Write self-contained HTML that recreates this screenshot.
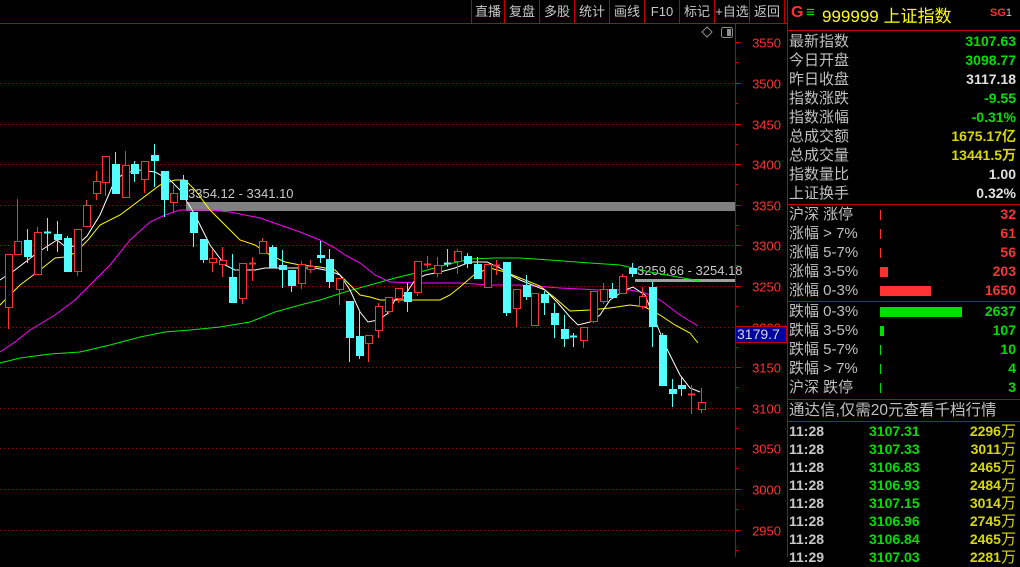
<!DOCTYPE html>
<html><head><meta charset="utf-8"><style>
body{margin:0;background:#000;width:1020px;height:557px;overflow:hidden;position:relative;font-family:"Liberation Sans","Noto Sans CJK SC",sans-serif}
.a{position:absolute;white-space:nowrap}
.tb{position:absolute;top:0;height:23px;line-height:23px;color:#c8c8c8;font-size:13px;text-align:center}
.l{position:absolute;left:789px;color:#c0c0c0;font-size:15px;line-height:19px}
.r{position:absolute;right:4px;font-size:14px;font-weight:bold;line-height:19px;font-family:"Liberation Sans","Noto Sans CJK SC",sans-serif}
.hl{position:absolute;left:787px;width:233px;height:1px;background:#c00000}
</style></head><body>
<svg id="s" width="1020" height="557" style="position:absolute;left:0;top:0"></svg>
<div class="a" style="left:0;top:23px;width:787px;height:1px;background:#c00000"></div>
<div class="a" style="left:787px;top:0;width:1px;height:557px;background:#c00000"></div>
<div class="a" style="left:735px;top:23px;width:1px;height:534px;background:#c00000"></div>
<div id="tbs"></div>
<div class="a" style="left:791px;top:4px;font-size:16px;color:#ff3232;font-weight:bold">G</div>
<div class="a" style="left:806px;top:4px;font-size:15px;color:#00e000">≡</div>
<div class="a" style="left:822px;top:2px;font-size:17px;color:#ffff00">999999 上证指数</div>
<div class="a" style="left:990px;top:7px;font-size:11px;color:#ff3232;font-weight:bold">SG<span style="font-weight:normal;color:#c0c0c0">1</span></div>
<div class="hl" style="top:30px"></div>
<div id="rp"></div>
<div class="a" style="left:735px;top:326px;width:49px;height:15px;background:#0000a0;border:1px solid #c00000;color:#d8d8d8;font-size:14px;line-height:15px;padding-left:1px">3179.7</div>
<script>
var s=document.getElementById('s'),h='';
function L(x1,y1,x2,y2,c,w,d){h+='<line x1="'+x1+'" y1="'+y1+'" x2="'+x2+'" y2="'+y2+'" stroke="'+c+'" stroke-width="'+(w||1)+'"'+(d?' stroke-dasharray="'+d+'"':'')+'/>';}
var labs=[3550,3500,3450,3400,3350,3300,3250,3200,3150,3100,3050,3000,2950];
labs.forEach(function(p,k){var y=Math.round(42.3+k*40.6)+0.5;if(k>0)L(0,y,735,y,'#a00000',1,'1 3');L(735,y,741,y,'#d00000');L(735,y+20,738,y+20,'#d00000');
h+='<text x="781" y="'+(y+5)+'" fill="#ff3232" font-size="13" text-anchor="end" font-family="Liberation Sans">'+p+'</text>';});
h+='<rect x="186" y="202" width="549" height="9" fill="#808080"/>';
h+='<rect x="635" y="279" width="100" height="3" fill="#a0a0a0"/>';
h+='<text x="188" y="198" fill="#c8c8c8" font-size="13" font-family="Liberation Sans">3354.12 - 3341.10</text>';
h+='<text x="637" y="275" fill="#c8c8c8" font-size="13" font-family="Liberation Sans">3259.66 - 3254.18</text>';
function P(a,c){h+='<polyline fill="none" stroke="'+c+'" stroke-width="1" points="'+a.map(function(p){return p.join(',')}).join(' ')+'"/>';}
P([[0,363],[20,358],[50,354],[80,352],[110,345],[140,337],[165,332],[190,330],[220,327],[250,322],[275,312],[300,305],[320,300],[345,292],[370,285],[395,278],[420,272],[445,265],[470,259],[495,258],[520,258],[550,260],[590,263],[620,265],[650,272],[700,281]],'#00f000');
P([[0,352],[15,342],[30,330],[55,315],[75,300],[90,285],[110,265],[130,240],[150,222],[165,215],[180,210],[195,210],[210,210],[230,212],[245,215],[260,218],[280,225],[300,232],[320,240],[335,248],[345,255],[360,263],[375,275],[390,282],[420,283],[460,283],[490,285],[520,285],[560,288],[600,290],[630,290],[645,293],[660,300],[680,315],[698,326]],'#ff00ff');
P([[0,305],[20,285],[40,270],[55,258],[65,257],[75,253],[88,240],[100,225],[120,215],[140,200],[160,185],[175,180],[185,180],[195,190],[210,210],[225,225],[240,240],[255,245],[270,255],[285,262],[300,265],[320,267],[335,270],[345,280],[360,295],[370,297],[380,300],[400,300],[440,300],[450,295],[460,287],[475,274],[490,268],[505,272],[520,278],[540,286],[555,298],[570,311],[590,310],[610,308],[630,305],[645,307],[660,315],[675,325],[690,333],[698,343]],'#ffff00');
P([[0,280],[15,270],[37,253],[57,240],[67,248],[77,245],[87,236],[100,215],[115,180],[125,173],[140,170],[155,172],[170,180],[180,190],[195,215],[210,245],[225,265],[235,270],[255,270],[265,268],[315,268],[330,271],[340,275],[350,290],[360,312],[368,322],[378,320],[387,314],[395,300],[405,295],[415,280],[425,275],[440,272],[455,268],[470,262],[487,262],[500,268],[510,275],[520,280],[545,290],[558,303],[570,317],[578,325],[590,322],[600,315],[610,300],[625,290],[633,287],[645,295],[655,320],[665,345],[680,375],[690,388],[700,392]],'#ffffff');
var C=[[8,254,307,254,329,'r'],[17,241,254,199,254,'r'],[27,240,257,229,263,'c'],[37,232,274,227,274,'r'],[47,232,232,218,251,'c'],[57,234,240,221,252,'c'],[67,238,272,236,272,'c'],[77,229,271,229,276,'r'],[86,205,226,200,226,'r'],[96,181,193,171,200,'r'],[105,156,182,156,196,'r'],[115,164,194,152,194,'c'],[125,165,197,151,197,'r'],[134,164,174,161,182,'c'],[144,161,179,161,193,'r'],[154,155,161,144,187,'c'],[164,171,200,171,217,'c'],[173,193,202,185,213,'r'],[183,180,200,175,200,'c'],[193,212,233,212,247,'c'],[203,239,260,239,263,'c'],[212,258,262,249,272,'r'],[222,260,264,247,277,'r'],[232,277,303,254,303,'c'],[242,263,298,263,304,'r'],[252,263,263,257,281,'r'],[262,241,253,238,253,'r'],[272,247,268,245,268,'c'],[282,265,270,250,288,'c'],[291,270,286,270,292,'c'],[301,264,283,261,289,'r'],[310,266,269,260,273,'r'],[320,255,258,241,263,'c'],[329,259,282,249,288,'c'],[339,278,289,278,305,'r'],[349,301,338,301,362,'c'],[359,336,356,312,359,'c'],[368,335,343,335,362,'r'],[378,306,330,303,338,'r'],[388,297,311,297,314,'r'],[398,288,298,288,303,'r'],[407,292,302,283,312,'c'],[417,261,292,261,296,'r'],[427,264,264,256,268,'r'],[437,265,273,257,277,'r'],[447,263,263,249,267,'c'],[457,251,261,249,274,'r'],[467,256,264,253,268,'c'],[477,264,279,257,279,'c'],[487,264,287,264,288,'r'],[496,265,265,260,275,'r'],[506,262,313,262,316,'c'],[516,289,308,289,327,'r'],[526,285,297,275,300,'c'],[534,293,325,293,325,'r'],[544,294,303,291,315,'c'],[554,313,325,303,338,'c'],[564,329,339,315,347,'c'],[573,336,336,333,347,'c'],[583,327,340,327,348,'r'],[593,291,321,291,323,'r'],[603,289,301,283,304,'r'],[612,289,298,283,298,'c'],[622,276,293,274,293,'r'],[632,268,274,263,277,'c'],[642,296,306,287,309,'r'],[652,287,327,282,347,'c'],[662,335,386,333,386,'c'],[672,389,394,379,407,'c'],[681,385,389,376,396,'c'],[691,394,394,385,414,'r'],[701,402,409,388,413,'r']];
C.forEach(function(k){var x=k[0],col=k[5]=='r'?'#ff3232':'#54ffff';
 L(x+0.5,k[3],x+0.5,k[4],col);
 if(k[2]-k[1]<2){L(x-3,k[1]+0.5,x+4,k[1]+0.5,col,2);}
 else if(k[5]=='r')h+='<rect x="'+(x-3)+'.5" y="'+k[1]+'.5" width="7" height="'+(k[2]-k[1])+'" fill="#000" stroke="'+col+'"/>';
 else h+='<rect x="'+(x-3)+'" y="'+k[1]+'" width="8" height="'+(k[2]-k[1])+'" fill="'+col+'"/>';});
h+='<path d="M707 27 L712 32 L707 37 L702 32 Z" fill="none" stroke="#909090"/>';
h+='<rect x="721.5" y="27.5" width="11" height="10" rx="2" fill="none" stroke="#909090"/><rect x="727" y="29" width="4" height="7" fill="#909090"/>';
s.innerHTML=h;
var tb=['直播','复盘','多股','统计','画线','F10','标记','+自选','返回'],xs=[471,504,539,574,609,644,679,714,749,784],t='';
xs.forEach(function(x){t+='<div class="a" style="left:'+x+'px;top:0;width:1px;height:23px;background:#c00000"></div>';});
tb.forEach(function(w,i){t+='<div class="tb" style="left:'+(xs[i]+1)+'px;width:'+(xs[i+1]-xs[i]-1)+'px">'+w+'</div>';});
document.getElementById('tbs').innerHTML=t;
var r='',G='#00e000',R='#ff3232',Y='#d8d800',W='#e0e0e0';
var rows=[['最新指数','3107.63',G],['今日开盘','3098.77',G],['昨日收盘','3117.18',W],['指数涨跌','-9.55',G],['指数涨幅','-0.31%',G],['总成交额','1675.17亿',Y],['总成交量','13441.5万',Y],['指数量比','1.00',W],['上证换手','0.32%',W]];
rows.forEach(function(a,i){var y=32+i*19;r+='<div class="l" style="top:'+y+'px">'+a[0]+'</div><div class="r" style="top:'+y+'px;color:'+a[2]+'">'+a[1]+'</div>';});
r+='<div class="hl" style="top:204px"></div>';
var up=[['沪深 涨停','32',1],['涨幅 > 7%','61',1],['涨幅 5-7%','56',1],['涨幅 3-5%','203',8],['涨幅 0-3%','1650',51]];
up.forEach(function(a,i){var y=205+i*19;r+='<div class="l" style="top:'+y+'px">'+a[0]+'</div><div class="a" style="left:880px;top:'+(y+5)+'px;width:'+a[2]+'px;height:10px;background:'+R+'"></div><div class="r" style="top:'+y+'px;color:'+R+'">'+a[1]+'</div>';});
r+='<div class="hl" style="top:301px"></div>';
var dn=[['跌幅 0-3%','2637',82],['跌幅 3-5%','107',4],['跌幅 5-7%','10',1],['跌幅 > 7%','4',1],['沪深 跌停','3',1]];
dn.forEach(function(a,i){var y=302+i*19;r+='<div class="l" style="top:'+y+'px">'+a[0]+'</div><div class="a" style="left:880px;top:'+(y+5)+'px;width:'+a[2]+'px;height:10px;background:'+G+'"></div><div class="r" style="top:'+y+'px;color:'+G+'">'+a[1]+'</div>';});
r+='<div class="hl" style="top:399px"></div>';
r+='<div class="l" style="top:401px;font-size:15.5px">通达信,仅需20元查看千档行情</div>';
r+='<div class="hl" style="top:421px"></div>';
var tr=[['3107.31','2296'],['3107.33','3011'],['3106.83','2465'],['3106.93','2484'],['3107.15','3014'],['3106.96','2745'],['3106.84','2465'],['3107.03','2281']];
tr.forEach(function(a,i){var y=422+i*18;r+='<div class="l" style="top:'+y+'px;font-size:14px;font-weight:bold;color:#c8c8c8">'+(i==7?'11:29':'11:28')+'</div><div class="a" style="left:869px;top:'+y+'px;font-size:14px;font-weight:bold;line-height:19px;color:'+G+'">'+a[0]+'</div><div class="r" style="top:'+y+'px;color:'+Y+'">'+a[1]+'<span style="font-weight:normal;font-size:15px">万</span></div>';});
document.getElementById('rp').innerHTML=r;
</script>
</body></html>
